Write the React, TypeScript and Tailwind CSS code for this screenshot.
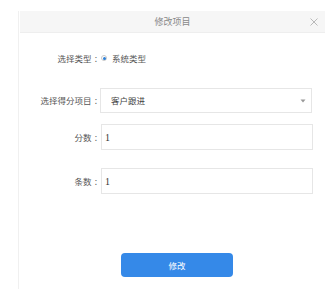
const font = {fontFamily: '"Noto Sans CJK SC", "Noto Sans", sans-serif'}

function Label({text}: {text: string}) {
  return (
    <span className="flex w-[80px] shrink-0 justify-end text-[8.5px] text-[#555]">
      {text}
      <span className="pl-[3px] pr-[2px]">:</span>
    </span>
  )
}

function TextInput({value}: {value: string}) {
  return (
    <div className="flex h-[26px] w-[212px] items-center border border-[#e6e6e6] bg-white pl-[3px]">
      <span className="font-['Liberation_Serif',serif] text-[10px] text-[#333]">{value}</span>
    </div>
  )
}

export default function App() {
  return (
    <div className="h-[289px] w-[325px] overflow-hidden bg-white" style={font}>
      <div className="ml-[18px] mt-[11px] h-[278px] border-l border-[#f0f0f0] bg-white">
        <div className="relative ml-[1px] flex h-[22px] items-center justify-center border-b border-[#eeeeee] bg-[#f6f6f6]">
          <span className="text-[9px] text-[#888]">修改项目</span>
          <svg className="absolute right-[7px] top-[7px]" width="8" height="8" viewBox="0 0 8 8">
            <path d="M0.5 0.5 L7.5 7.5 M7.5 0.5 L0.5 7.5" stroke="#aaa" strokeWidth="0.8" />
          </svg>
        </div>

        <div className="flex flex-col">
          <div className="mt-[18px] flex h-[14px] items-center">
            <Label text="选择类型" />
            <span className="ml-[2px] flex h-[6px] w-[6px] items-center justify-center rounded-full border border-[#c9c9c9]">
              <span className="h-[3px] w-[3px] rounded-full bg-[#2d7fd6]" />
            </span>
            <span className="ml-[5px] text-[8.5px] text-[#555]">系统类型</span>
          </div>

          <div className="mt-[23px] flex items-center">
            <Label text="选择得分项目" />
            <div className="ml-[1px] flex h-[25px] w-[212px] items-center justify-between border border-[#e6e6e6] bg-white pl-[10px] pr-[5px]">
              <span className="text-[8.5px] text-[#444]">客户跟进</span>
              <svg width="6" height="4" viewBox="0 0 6 4">
                <path d="M0.5 0.5 L5.5 0.5 L3 3.5 Z" fill="#999" />
              </svg>
            </div>
          </div>

          <div className="mt-[11px] flex items-center">
            <Label text="分数" />
            <div className="ml-[2px]">
              <TextInput value="1" />
            </div>
          </div>

          <div className="mt-[18px] flex items-center">
            <Label text="条数" />
            <div className="ml-[2px]">
              <TextInput value="1" />
            </div>
          </div>

          <div className="mt-[59px] flex pl-[102px]">
            <button className="h-[24px] w-[112px] rounded-[4px] bg-[#3589e8] text-[8.5px] text-white">修改</button>
          </div>
        </div>
      </div>
    </div>
  )
}
